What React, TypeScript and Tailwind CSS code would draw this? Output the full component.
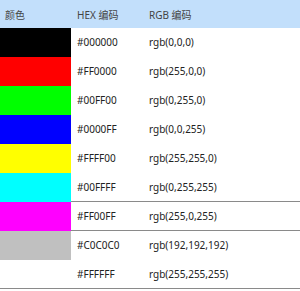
import React from "react";

type Row = { c: string; hex: string; rgb: string; b: 0 | 1 | 2 };

const rows: Row[] = [
  { c: "#000000", hex: "#000000", rgb: "rgb(0,0,0)", b: 0 },
  { c: "#FF0000", hex: "#FF0000", rgb: "rgb(255,0,0)", b: 0 },
  { c: "#00FF00", hex: "#00FF00", rgb: "rgb(0,255,0)", b: 0 },
  { c: "#0000FF", hex: "#0000FF", rgb: "rgb(0,0,255)", b: 0 },
  { c: "#FFFF00", hex: "#FFFF00", rgb: "rgb(255,255,0)", b: 0 },
  { c: "#00FFFF", hex: "#00FFFF", rgb: "rgb(0,255,255)", b: 1 },
  { c: "#FF00FF", hex: "#FF00FF", rgb: "rgb(255,0,255)", b: 1 },
  { c: "#C0C0C0", hex: "#C0C0C0", rgb: "rgb(192,192,192)", b: 0 },
  { c: "#FFFFFF", hex: "#FFFFFF", rgb: "rgb(255,255,255)", b: 2 },
];

export default function App() {
  return (
    <div
      className="w-[300px] h-[291px] bg-white text-[10px] leading-[15px] text-[#222]"
      style={{ fontFamily: '"Noto Sans", "Noto Sans CJK SC", sans-serif' }}
    >
      <div className="flex h-[28px] items-center pt-[3px] bg-[#c2dffb] text-[#444]">
        <div className="w-[71px] pl-[5px]">颜色</div>
        <div className="w-[78px] pl-[6px]">HEX 编码</div>
        <div className="flex-1">RGB 编码</div>
      </div>
      {rows.map((r) => (
        <div
          key={r.hex}
          className={`flex h-[29px] ${r.b === 2 ? "border-b border-[#8a8a8a]" : ""}`}
        >
          <div className="w-[71px] h-full" style={{ backgroundColor: r.c }} />
          <div
            className={`flex flex-1 items-center ${
              r.b === 1 ? "border-b border-[#8a8a8a]" : ""
            }`}
          >
            <div className="w-[78px] pl-[6px]">{r.hex}</div>
            <div className="flex-1">{r.rgb}</div>
          </div>
        </div>
      ))}
    </div>
  );
}
